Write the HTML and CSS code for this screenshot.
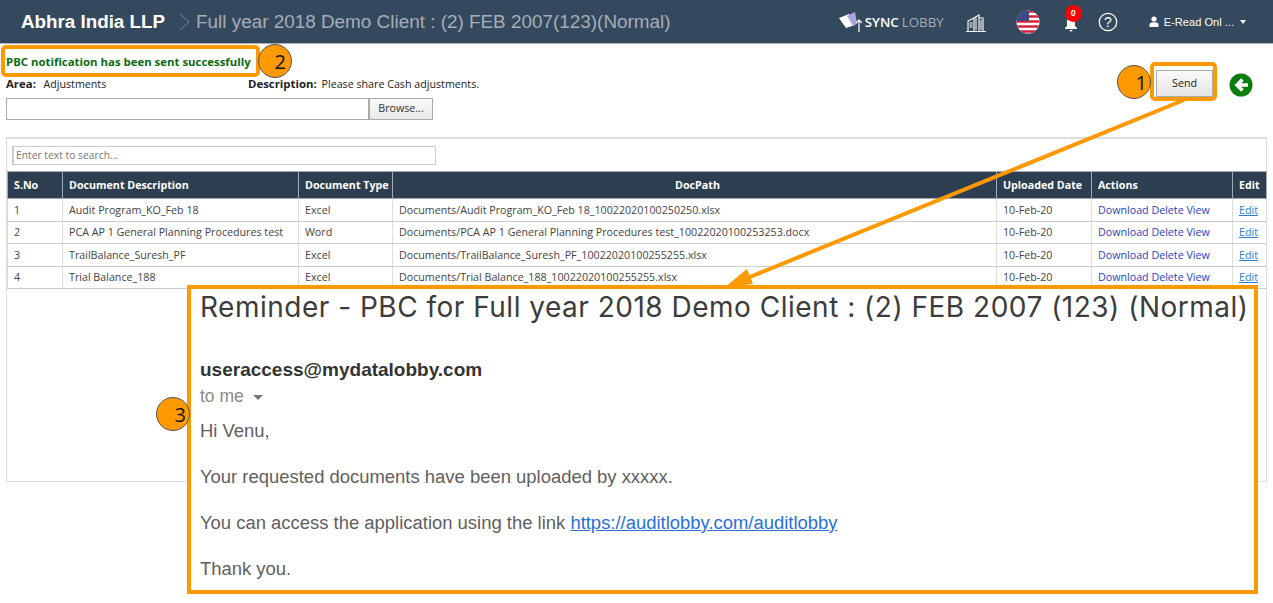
FILE: index.html
```html
<!doctype html>
<html>
<head>
    <meta charset="utf-8">
    <title>PBC notification</title>
    <link rel="stylesheet" href="styles.css">
</head>

<body>

<div class="topbar">
    <div class="brand">Abhra India LLP</div>
    <svg class="crumb-sep" width="12" height="20" viewBox="0 0 12 20"><path d="M1 2l9 8-9 8" fill="none" stroke="#7c8a9b" stroke-width="1"/></svg>
    <div class="crumb">Full year 2018 Demo Client : (2) FEB 2007(123)(Normal)</div>
    <div class="top-right">
        <div class="sync">
            <svg width="26" height="22" viewBox="0 0 26 22">
                <path d="M1 7l10-4 6 11-9 3z" fill="#fff"/>
                <path d="M9 5l8-4 2 12-4 2z" fill="#a9a5e0"/>
                <path d="M21 21V9M18 12l3-3 3 3" fill="none" stroke="#fff" stroke-width="1.2"/>
            </svg>
            <span class="sync-a">SYNC</span><span class="sync-b">LOBBY</span>
        </div>
        <svg class="ico-building" width="22" height="20" viewBox="0 0 22 20">
            <path d="M1 19.500h20" stroke="#fff" fill="none"/>
            <path d="M3 19V9l6-3v13M9 6l5-3v16M14 6h4v13" fill="none" stroke="#fff" stroke-width="1.100"/>
            <path d="M4.500 11h3M4.500 13h3M4.500 15h3M11 6v12M16 8v10" stroke="#fff" fill="none"/>
        </svg>
        <svg class="ico-flag" width="24" height="24" viewBox="0 0 24 24">
            <defs><clipPath id="flagclip"><circle cx="12" cy="12" r="11.500"/></clipPath></defs>
            <g clip-path="url(#flagclip)">
                <rect width="24" height="24" fill="#fff"/>
                <path d="M0 1.500h24M0 6.500h24M0 11.500h24M0 16.500h24M0 21.500h24" stroke="#d8203c" stroke-width="2.500"/>
                <rect width="13" height="11" fill="#3f4a86"/>
            </g>
        </svg>
        <div class="bell">
            <svg width="14" height="15" viewBox="0 0 14 15"><path d="M7 1a4 4 0 0 1 4 4v4l2 2v1H1v-1l2-2V5a4 4 0 0 1 4-4zM5.500 13h3a1.500 1.500 0 0 1-3 0z" fill="#fff"/></svg>
            <span class="badge">0</span>
        </div>
        <svg class="ico-help" width="20" height="20" viewBox="0 0 20 20">
            <circle cx="10" cy="10" r="8.700" fill="none" stroke="#fff" stroke-width="1.300"/>
            <text x="10" y="14.500" text-anchor="middle" class="help-q">?</text>
        </svg>
        <div class="user">
            <svg width="10" height="11" viewBox="0 0 10 11"><circle cx="5" cy="3" r="2.600" fill="#fff"/><path d="M0.500 11V8.500C0.500 7 2.500 6.300 5 6.300s4.500 .7 4.500 2.200V11z" fill="#fff"/></svg>
            <span>E-Read Onl ...</span>
            <i class="caret"></i>
        </div>
    </div>
</div>

<div class="main">
    <div class="form-row">
        <div class="form-left">
            <div class="msg">PBC notification has been sent successfully</div>
            <div class="meta">
                <div class="meta-area"><b>Area:</b>&nbsp; Adjustments</div>
                <div><b>Description:</b> Please share Cash adjustments.</div>
            </div>
            <div class="file-row">
                <div class="file-box"></div>
                <div class="browse">Browse...</div>
            </div>
        </div>
        <div class="form-right">
            <div class="send">Send</div>
            <svg class="back" width="24" height="24" viewBox="0 0 24 24">
                <circle cx="12" cy="12" r="11.500" fill="#0a7d0a"/>
                <path d="M19 12H9M13.500 6.500L8 12l5.500 5.500" fill="none" stroke="#fff" stroke-width="3.600"/>
            </svg>
        </div>
    </div>

    <div class="panel">
        <div class="search">Enter text to search...</div>
        <table class="grid">
            <thead>
                <tr>
                    <th class="c-no">S.No</th>
                    <th class="c-desc">Document Description</th>
                    <th class="c-type">Document Type</th>
                    <th class="c-path">DocPath</th>
                    <th class="c-date">Uploaded Date</th>
                    <th class="c-act">Actions</th>
                    <th class="c-edit">Edit</th>
                </tr>
            </thead>
            <tbody>
                <tr>
                    <td>1</td><td>Audit Program_KO_Feb 18</td><td>Excel</td>
                    <td>Documents/Audit Program_KO_Feb 18_10022020100250250.xlsx</td>
                    <td>10-Feb-20</td>
                    <td class="links">Download Delete View</td><td class="edit"><a>Edit</a></td>
                </tr>
                <tr>
                    <td>2</td><td>PCA AP 1 General Planning Procedures test</td><td>Word</td>
                    <td>Documents/PCA AP 1 General Planning Procedures test_10022020100253253.docx</td>
                    <td>10-Feb-20</td>
                    <td class="links">Download Delete View</td><td class="edit"><a>Edit</a></td>
                </tr>
                <tr>
                    <td>3</td><td>TrailBalance_Suresh_PF</td><td>Excel</td>
                    <td>Documents/TrailBalance_Suresh_PF_10022020100255255.xlsx</td>
                    <td>10-Feb-20</td>
                    <td class="links">Download Delete View</td><td class="edit"><a>Edit</a></td>
                </tr>
                <tr>
                    <td>4</td><td>Trial Balance_188</td><td>Excel</td>
                    <td>Documents/Trial Balance_188_10022020100255255.xlsx</td>
                    <td>10-Feb-20</td>
                    <td class="links">Download Delete View</td><td class="edit"><a>Edit</a></td>
                </tr>
            </tbody>
        </table>
    </div>
</div>

<!-- annotations on top of the screenshot -->
<div class="mark mark-msg"></div>
<div class="mark mark-send"></div>
<svg class="arrow" width="1273" height="603" viewBox="0 0 1273 603">
    <path d="M1184 100L745 279" fill="none" stroke="#ff9900" stroke-width="4"/>
    <path d="M725 287l22-18 6 15z" fill="#ff9900"/>
</svg>
<div class="num num-1">1</div>
<div class="num num-2">2</div>

<div class="mail">
    <div class="mail-title">Reminder - PBC for Full year 2018 Demo Client : (2) FEB 2007 (123) (Normal)</div>
    <div class="mail-from">useraccess@mydatalobby.com</div>
    <div class="mail-to">to me <i class="to-caret"></i></div>
    <p class="mail-hi">Hi Venu,</p>
    <p>Your requested documents have been uploaded by xxxxx.</p>
    <p>You can access the application using the link <a>https://auditlobby.com/auditlobby</a></p>
    <p>Thank you.</p>
</div>
<div class="num num-3">3</div>

</body>
</html>
```

FILE: styles.css
```css
html, body {
    margin: 0;
    padding: 0;
}

body {
    font-family: "Open Sans", "Liberation Sans", sans-serif;
    font-size: 10.7px;
    color: #333;
    background: #fff;
    height: 603px;
    overflow: hidden;
    position: relative;
}

.topbar {
    height: 43px;
    background: #34495e;
    border-bottom: 1px solid #a9b0b8;
    display: flex;
    align-items: center;
    font-family: "Liberation Sans", sans-serif;
    color: #fff;
}

.brand {
    margin-left: 21px;
    font-size: 18.8px;
    font-weight: bold;
}

.crumb-sep {
    margin-left: 14px;
}

.crumb {
    margin-left: 5px;
    font-size: 18.9px;
    color: #a5adb7;
}

.top-right {
    margin-left: auto;
    display: flex;
    align-items: center;
}

.sync {
    display: flex;
    align-items: center;
    font-family: "Open Sans", sans-serif;
    font-size: 13.3px;
}

.sync-a {
    margin-left: 1px;
    font-weight: 600;
}

.sync-b {
    margin-left: 3px;
    color: #a5adb7;
}

.ico-building {
    margin-left: 21px;
}

.ico-flag {
    margin-left: 29px;
}

.bell {
    margin-left: 24px;
    width: 14px;
    height: 15px;
    position: relative;
    display: flex;
    margin-top: 5px;
}

.badge {
    position: absolute;
    left: 1px;
    top: -12px;
    width: 17px;
    height: 17px;
    border-radius: 50%;
    background: #f00;
    font: bold 9px/16px "Liberation Sans", sans-serif;
    text-align: center;
}

.ico-help {
    margin-left: 20px;
}

.help-q {
    font: 14px "Liberation Sans", sans-serif;
    fill: #fff;
}

.user {
    margin-left: 31px;
    margin-right: 27px;
    display: flex;
    align-items: center;
    font-size: 11.1px;
}

.user span {
    margin-left: 5px;
}

.caret {
    margin-left: 6px;
    border-top: 4px solid #fff;
    border-left: 3.500px solid transparent;
    border-right: 3.500px solid transparent;
}

.main {
    padding: 0 6px;
}

.form-row {
    display: flex;
    justify-content: space-between;
    height: 93px;
}

.msg {
    margin-top: 10px;
    font-size: 11.4px;
    font-weight: 700;
    line-height: 15px;
    color: #0a6b12;
}

.meta {
    display: flex;
    margin-top: 8px;
    line-height: 14px;
    color: #222;
}

.meta b {
    font-size: 11.4px;
    font-weight: 700;
    margin-right: 2px;
}

.meta-area {
    width: 242px;
}

.file-row {
    display: flex;
    margin-top: 7px;
}

.file-box {
    width: 361px;
    height: 20px;
    border: 1px solid #aaa;
}

.browse {
    width: 62px;
    height: 20px;
    border: 1px solid #aaa;
    background: linear-gradient(#fafafa, #e8e8e8);
    text-align: center;
    line-height: 19px;
}

.form-right {
    display: flex;
    padding-top: 26px;
    margin-right: 14px;
}

.send {
    width: 55px;
    height: 25px;
    border: 1px solid #aaa;
    background: linear-gradient(#fafafa, #e4e4e4);
    text-align: center;
    line-height: 25px;
    color: #222;
}

.back {
    margin-left: 16px;
    margin-top: 3px;
}

.panel {
    height: 345px;
    border: 1px solid #ddd;
    border-width: 2px 1px 1px;
    box-sizing: border-box;
    position: relative;
}

.search {
    margin: 7px 0 0 5px;
    width: 424px;
    height: 19px;
    border: 1px solid #ccc;
    border-left-width: 2px;
    padding-left: 2px;
    box-sizing: border-box;
    line-height: 17px;
    color: #777;
    font-size: 10.3px;
}

.grid {
    margin-top: 6px;
    width: calc(100% + 1px);
    border-collapse: collapse;
    table-layout: fixed;
}

.grid th {
    height: 26px;
    background: #2d3e50;
    color: #fff;
    font-weight: 700;
    text-align: left;
    padding: 0 0 0 6px;
    border: 1px solid #a2abb4;
    white-space: nowrap;
}

.grid td {
    height: 21.500px;
    padding: 0 0 0 6px;
    border: 1px solid #ddd;
    border-bottom-color: #ccc;
    white-space: nowrap;
    overflow: hidden;
    color: #444;
}

.grid th.c-path {
    text-align: center;
}

.c-no { width: 48px; }
.c-desc { width: 229px; }
.c-type { width: 87px; }
.c-path { width: 597px; }
.c-date { width: 88px; }
.c-act { width: 134px; }

.grid .links {
    color: #2a3fc0;
}

.grid .edit a {
    color: #2a7fd0;
    text-decoration: underline;
}

/* annotations */
.mark {
    position: absolute;
    border: 4px solid #ff9900;
    border-radius: 5px;
    box-sizing: border-box;
}

.mark-msg {
    left: 1px;
    top: 45px;
    width: 259px;
    height: 32px;
}

.mark-send {
    left: 1150px;
    top: 62px;
    width: 67px;
    height: 39px;
}

.arrow {
    position: absolute;
    left: 0;
    top: 0;
}

.num {
    position: absolute;
    width: 34px;
    height: 34px;
    border: 1px solid #555;
    border-radius: 50%;
    box-sizing: border-box;
    background: #ff9900;
    font: 20px/34px "Open Sans", sans-serif;
    color: #111;
    text-align: right;
    padding-right: 3px;
}

.num-1 { left: 1117px; top: 65px; }
.num-2 { left: 258px; top: 44px; padding-right: 5px; }
.num-3 { left: 156px; top: 397px; }

.mail {
    position: absolute;
    left: 187px;
    top: 285px;
    width: 1071px;
    height: 309px;
    box-sizing: border-box;
    border: 4px solid #ff9900;
    background: #fff;
    padding: 0 0 0 9px;
    font-family: "Liberation Sans", sans-serif;
    font-size: 18.45px;
    color: #5f6060;
}

.mail p {
    margin: 0 0 27px;
    line-height: 19px;
    white-space: nowrap;
}

.mail p.mail-hi {
    margin-top: 16px;
}

.mail-title {
    font-family: Inter, "Open Sans", sans-serif;
    font-size: 28px;
    letter-spacing: 0.5px;
    line-height: 36px;
    color: #3c3c3c;
    white-space: nowrap;
}

.mail-from {
    margin-top: 35px;
    font-size: 19px;
    font-weight: bold;
    line-height: 20px;
    color: #333;
}

.mail-to {
    margin-top: 7px;
    font-size: 17.500px;
    line-height: 18px;
    color: #8a8a8a;
}

.to-caret {
    display: inline-block;
    margin-left: 4px;
    vertical-align: 2px;
    border-top: 5px solid #777;
    border-left: 5px solid transparent;
    border-right: 5px solid transparent;
}

.mail a {
    color: #2a6fd8;
    text-decoration: underline;
}
```
